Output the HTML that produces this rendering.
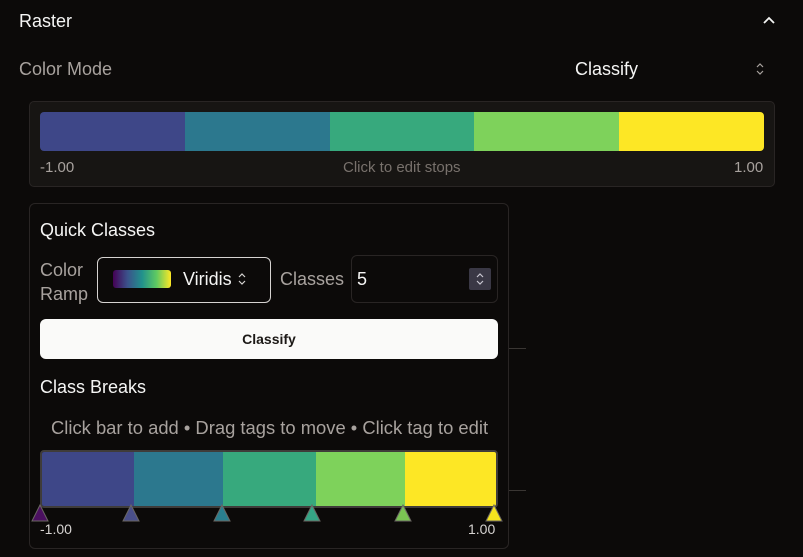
<!DOCTYPE html>
<html><head><meta charset="utf-8"><style>
*{box-sizing:border-box;margin:0;padding:0}
body{width:803px;height:557px;background:#0c0a09;font-family:"Liberation Sans","DejaVu Sans",sans-serif;color:#f5f5f4;position:relative;overflow:hidden}
.a{position:absolute;white-space:nowrap}
.seg{position:absolute;top:0;bottom:0}
</style></head><body>
<div class="a" style="left:19px;top:11px;font-size:18px;">Raster</div>
<svg class="a" style="left:762px;top:15px" width="14" height="10" viewBox="0 0 14 10"><path d="M2 8 L7 3 L12 8" stroke="#f5f5f4" stroke-width="1.8" fill="none"/></svg>
<div class="a" style="left:19px;top:59px;font-size:18px;color:#a8a29e">Color Mode</div>
<div class="a" style="left:575px;top:59px;font-size:18px;">Classify</div>
<svg class="a" style="left:754px;top:61px" width="12" height="16" viewBox="0 0 12 16"><path d="M3 6 L6 3 L9 6 M3 10 L6 13 L9 10" stroke="#a8a29e" stroke-width="1.2" fill="none"/></svg>

<div class="a" style="left:29px;top:101px;width:746px;height:86px;background:#171513;border:1px solid #292524;border-radius:5px"></div>
<div class="a" style="left:40px;top:112px;width:724px;height:39px;border-radius:4px;overflow:hidden">
<div class="seg" style="left:0;width:145px;background:#3e4788"></div>
<div class="seg" style="left:145px;width:145px;background:#2c788e"></div>
<div class="seg" style="left:290px;width:144px;background:#37a97d"></div>
<div class="seg" style="left:434px;width:145px;background:#7ed25b"></div>
<div class="seg" style="left:579px;width:145px;background:#fde725"></div>
</div>
<div class="a" style="left:40px;top:159px;font-size:15px;color:#a8a29e">-1.00</div>
<div class="a" style="left:343px;top:159px;font-size:15px;color:#78716c">Click to edit stops</div>
<div class="a" style="left:734px;top:159px;font-size:15px;color:#a8a29e">1.00</div>

<div class="a" style="left:29px;top:203px;width:480px;height:346px;border:1px solid #292524;border-radius:6px;background:#0c0a09"></div>
<div class="a" style="left:509px;top:348px;width:17px;height:1px;background:#3a3633"></div>
<div class="a" style="left:509px;top:490px;width:17px;height:1px;background:#3a3633"></div>
<div class="a" style="left:40px;top:220px;font-size:18px;">Quick Classes</div>
<div class="a" style="left:40px;top:258px;font-size:18px;color:#a8a29e;line-height:24px;white-space:normal;width:55px">Color Ramp</div>
<div class="a" style="left:97px;top:257px;width:174px;height:46px;border:1px solid #d6d3d1;border-radius:6px"></div>
<div class="a" style="left:113px;top:270px;width:58px;height:18px;border-radius:3px;background:linear-gradient(90deg,#440154,#3b528b,#21918c,#5ec962,#fde725)"></div>
<div class="a" style="left:183px;top:269px;font-size:18px;">Viridis</div>
<svg class="a" style="left:237px;top:272px" width="10" height="14" viewBox="0 0 10 14"><path d="M2 5 L5 2 L8 5 M2 9 L5 12 L8 9" stroke="#d6d3d1" stroke-width="1.2" fill="none"/></svg>
<div class="a" style="left:280px;top:269px;font-size:18px;color:#a8a29e">Classes</div>
<div class="a" style="left:351px;top:255px;width:147px;height:48px;border:1px solid #292524;border-radius:6px"></div>
<div class="a" style="left:357px;top:269px;font-size:18px;">5</div>
<div class="a" style="left:469px;top:268px;width:22px;height:22px;background:#3a3845;border-radius:2px"></div>
<svg class="a" style="left:474px;top:270px" width="12" height="18" viewBox="0 0 12 18"><path d="M3 7 L6 4 L9 7 M3 11 L6 14 L9 11" stroke="#c8c6d0" stroke-width="1.2" fill="none"/></svg>
<div class="a" style="left:40px;top:319px;width:458px;height:40px;background:#fafaf9;border-radius:6px;color:#1c1917;font-size:14px;font-weight:600;text-align:center;line-height:40px">Classify</div>
<div class="a" style="left:40px;top:377px;font-size:18px;">Class Breaks</div>
<div class="a" style="left:51px;top:417px;font-size:18.4px;color:#a8a29e">Click bar to add • Drag tags to move • Click tag to edit</div>
<div class="a" style="left:40px;top:450px;width:458px;height:58px;border:2px solid #3f3c3a;border-radius:4px;overflow:hidden">
<div class="seg" style="left:0;width:92px;background:#3e4788"></div>
<div class="seg" style="left:92px;width:89px;background:#2c788e"></div>
<div class="seg" style="left:181px;width:93px;background:#37a97d"></div>
<div class="seg" style="left:274px;width:89px;background:#7ed25b"></div>
<div class="seg" style="left:363px;width:95px;background:#fde725"></div>
</div>
<svg class="a" style="left:0;top:500px" width="520" height="25">
<g stroke="#6b6763" stroke-width="1">
<polygon points="40,5 32,21 48,21" fill="#4b1060"/>
<polygon points="131,5 123,21 139,21" fill="#4a4f8a"/>
<polygon points="222,5 214,21 230,21" fill="#2a7f8f"/>
<polygon points="312,5 304,21 320,21" fill="#35a585"/>
<polygon points="403,5 395,21 411,21" fill="#7ac353"/>
<polygon points="494,5 486,21 502,21" fill="#f5e51e"/>
</g></svg>
<div class="a" style="left:40px;top:521px;font-size:14px;color:#d6d3d1">-1.00</div>
<div class="a" style="left:468px;top:521px;font-size:14px;color:#d6d3d1">1.00</div>
</body></html>
